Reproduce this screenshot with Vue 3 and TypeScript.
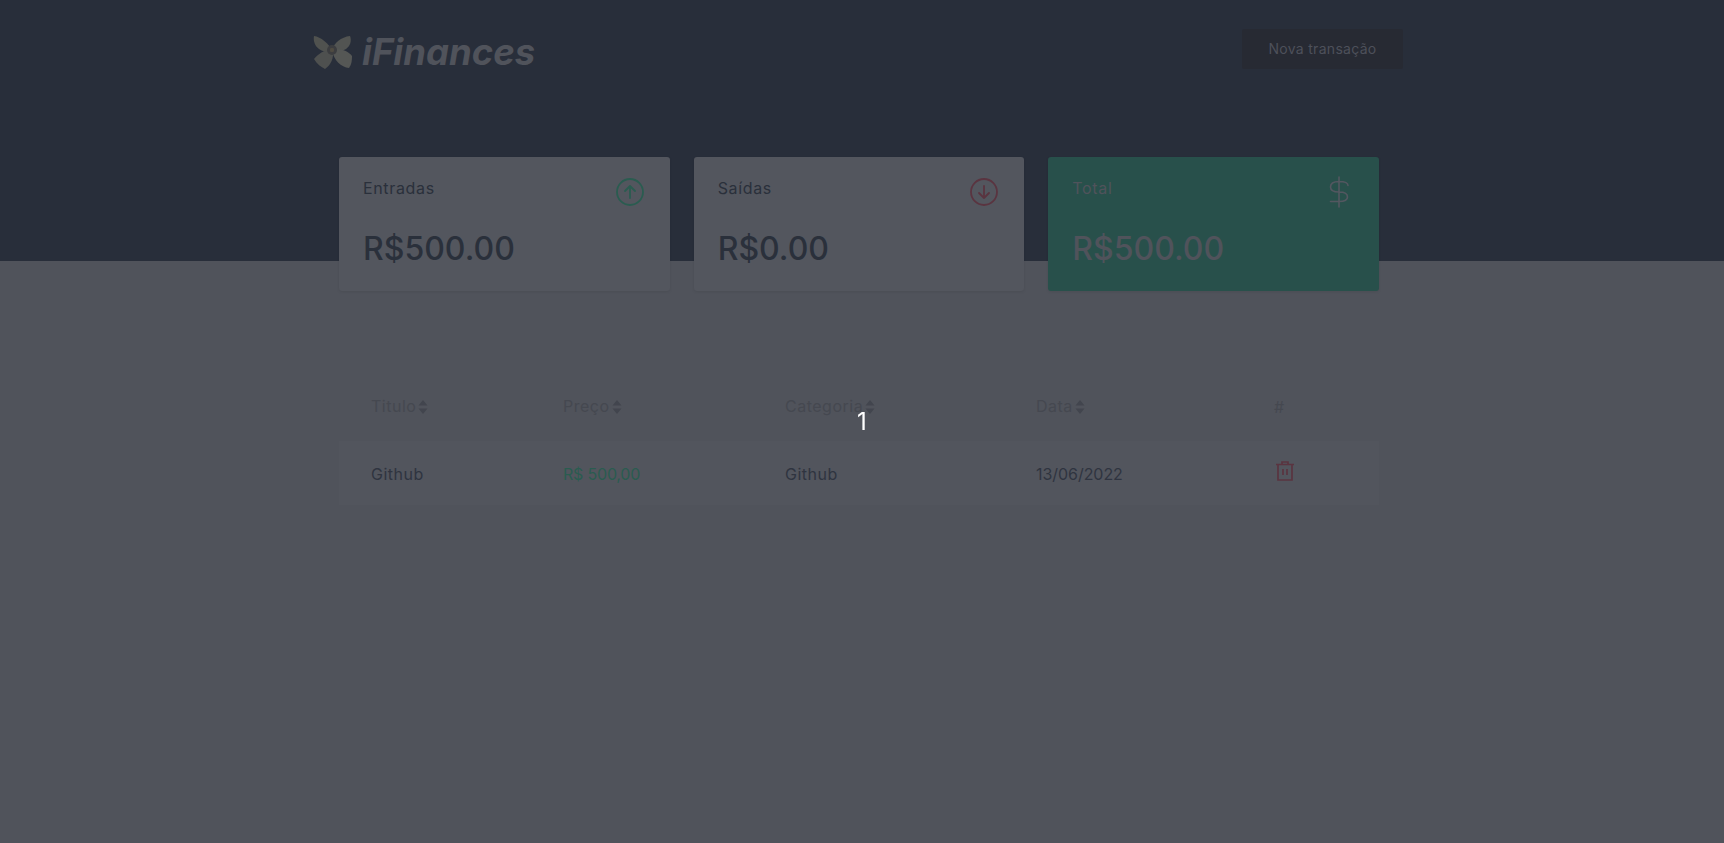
<template>
  <div class="page">
    <header class="top">
      <div class="top-inner">
        <div class="brand">
          <svg class="flower" viewBox="0 0 40 34" aria-hidden="true">
            <path d="M20 16C15 8 8 2 1 1C0 6 2 11 6 14C10 17 16 18 20 16Z" fill="#50524f" />
            <path d="M19 15C21 8 28 2 37 1C39 6 37 11 33 14C28 17 23 17 19 15Z" fill="#525452" />
            <path d="M19 15C27 13 35 16 39 21C39 27 38 30 36 33C28 32 21 26 19 15Z" fill="#555755" />
            <path d="M20 15C13 14 6 18 1 24C4 29 8 32 12 34C18 30 21 23 20 15Z" fill="#4e504f" />
            <circle cx="19" cy="15" r="5" fill="#3c3d40" />
            <circle cx="19" cy="15" r="2.200" fill="#4f4b42" />
          </svg>
          <span class="logo-text">iFinances</span>
        </div>
        <button class="new-btn" type="button">Nova transação</button>
      </div>
    </header>

    <main class="content">
      <section class="cards">
        <div v-for="card in cards" :key="card.title" class="card" :class="{ 'card-total': card.kind === 'total' }">
          <div class="card-head">
            <span class="card-title">{{ card.title }}</span>
            <svg v-if="card.kind === 'in'" class="card-icon" viewBox="0 0 32 32" fill="none" stroke="#2a5c50" stroke-width="1.8" stroke-linecap="round" stroke-linejoin="round">
              <circle cx="16" cy="16" r="13" />
              <path d="M16 22V10M11 15l5-5 5 5" />
            </svg>
            <svg v-else-if="card.kind === 'out'" class="card-icon" viewBox="0 0 32 32" fill="none" stroke="#5a3440" stroke-width="1.8" stroke-linecap="round" stroke-linejoin="round">
              <circle cx="16" cy="16" r="13" />
              <path d="M16 10v12M11 17l5 5 5-5" />
            </svg>
            <svg v-else class="card-icon" viewBox="0 0 32 32" fill="none" stroke="#535760" stroke-width="1.6" stroke-linecap="round">
              <path d="M16 1v30M25 9.500C25 6 21 5.500 16 5.500C11 5.500 7.500 7.500 7.500 11C7.500 15 11.500 16 16 16C21 16 24.500 17.500 24.500 21C24.500 24.500 21 25.500 16 25.500H7.500" />
            </svg>
          </div>
          <strong class="card-value">{{ card.value }}</strong>
        </div>
      </section>

      <table class="list">
        <colgroup>
          <col v-for="w in colWidths" :key="w.name" :style="{ width: w.size + 'px' }" />
        </colgroup>
        <thead>
          <tr>
            <th v-for="h in headers" :key="h">
              {{ h }}
              <svg class="sort" viewBox="0 0 10 14" aria-hidden="true">
                <path d="M5 0 9.500 5.500H.5ZM5 14 .5 8.500H9.500Z" fill="#42454e" />
              </svg>
            </th>
            <th>#</th>
          </tr>
        </thead>
        <tbody>
          <tr v-for="row in rows" :key="row.title">
            <td>{{ row.title }}</td>
            <td class="price">{{ row.price }}</td>
            <td>{{ row.category }}</td>
            <td class="date">{{ row.date }}</td>
            <td>
              <svg class="trash" viewBox="0 0 18 20" fill="none" stroke="#5a3440" stroke-width="1.7">
                <path d="M0 3.500H18M6 3.500V1H12V3.500M2 3.500V19H16V3.500M7 8V14M11 8V14" />
              </svg>
            </td>
          </tr>
        </tbody>
      </table>
    </main>

    <div class="overlay"><span class="overlay-count">1</span></div>
  </div>
</template>

<script setup lang="ts">
interface Card {
  title: string
  value: string
  kind: 'in' | 'out' | 'total'
}

const cards: Card[] = [
  { title: 'Entradas', value: 'R$500.00', kind: 'in' },
  { title: 'Saídas', value: 'R$0.00', kind: 'out' },
  { title: 'Total', value: 'R$500.00', kind: 'total' },
]

const headers = ['Titulo', 'Preço', 'Categoria', 'Data']

const colWidths = [
  { name: 'title', size: 192 },
  { name: 'price', size: 222 },
  { name: 'category', size: 251 },
  { name: 'date', size: 238 },
  { name: 'actions', size: 137 },
]

const rows = [
  { title: 'Github', price: 'R$ 500,00', category: 'Github', date: '13/06/2022' },
]
</script>

<style>
html,
body {
  margin: 0;
  background: #50535b;
}
</style>

<style scoped>
.page {
  position: relative;
  min-height: 843px;
  padding-right: 6px;
  box-sizing: border-box;
  background: #50535b;
  font-family: Inter, "Noto Sans", sans-serif;
  color: #2a303b;
}

.top {
  height: 261px;
  margin-right: -6px;
  padding-right: 6px;
  background: #282e3a;
}

.top-inner {
  width: 1088px;
  margin: 0 auto;
  padding-top: 29px;
  display: flex;
  justify-content: space-between;
  align-items: flex-start;
}

.brand {
  display: flex;
  align-items: center;
  gap: 9px;
  height: 46px;
  margin-left: -2px;
}

.flower {
  width: 40px;
  height: 34px;
}

.logo-text {
  font-family: Inter, "Liberation Sans", sans-serif;
  font-size: 36.5px;
  font-style: italic;
  font-weight: 700;
  color: #50535b;
}

.new-btn {
  width: 161px;
  height: 40px;
  padding-bottom: 3px;
  border: 0;
  border-radius: 2px;
  background: #272a33;
  color: #4d505a;
  font-family: inherit;
  font-size: 14px;
  letter-spacing: 0.3px;
}

.content {
  width: 1040px;
  margin: -104px auto 0;
}

.cards {
  display: grid;
  grid-template-columns: repeat(3, 1fr);
  gap: 24px;
}

.card {
  height: 134px;
  box-sizing: border-box;
  padding: 19px 24px 0;
  border-radius: 3px;
  background: #53565e;
  box-shadow: 0 1px 3px rgba(0, 0, 0, 0.08);
}

.card-total {
  background: #28504b;
  color: #50535b;
}

.card-head {
  display: flex;
  justify-content: space-between;
  align-items: flex-start;
}

.card-title {
  font-size: 16px;
  line-height: 24px;
  letter-spacing: 0.65px;
}

.card-icon {
  width: 32px;
  height: 32px;
}

.card-value {
  display: block;
  margin-top: 17px;
  font-size: 32px;
  line-height: 48px;
  font-weight: 500;
  letter-spacing: 0;
}

.list {
  width: 1040px;
  margin-top: 81px;
  table-layout: fixed;
  border-collapse: separate;
  border-spacing: 0;
  font-size: 16px;
}

.list th {
  height: 69px;
  padding: 0 0 0 32px;
  text-align: left;
  font-weight: 400;
  color: #454850;
  letter-spacing: 0.5px;
}

.list td {
  height: 64px;
  padding: 2px 0 0 32px;
  box-sizing: border-box;
  background: #52555d;
  color: #2f3440;
  letter-spacing: 0.5px;
}

.list .price {
  color: #2a5c50;
  letter-spacing: -0.2px;
}

.list .date {
  letter-spacing: -0.05px;
}

.sort {
  width: 10px;
  height: 14px;
  margin: 0 0 3px -3px;
  vertical-align: middle;
}

.trash {
  display: block;
  width: 18px;
  height: 20px;
  margin: -7px 0 0 2px;
}

.overlay {
  position: fixed;
  inset: 0;
  display: flex;
  align-items: center;
  justify-content: center;
}

.overlay-count {
  font-size: 24px;
  color: #fff;
}
</style>
